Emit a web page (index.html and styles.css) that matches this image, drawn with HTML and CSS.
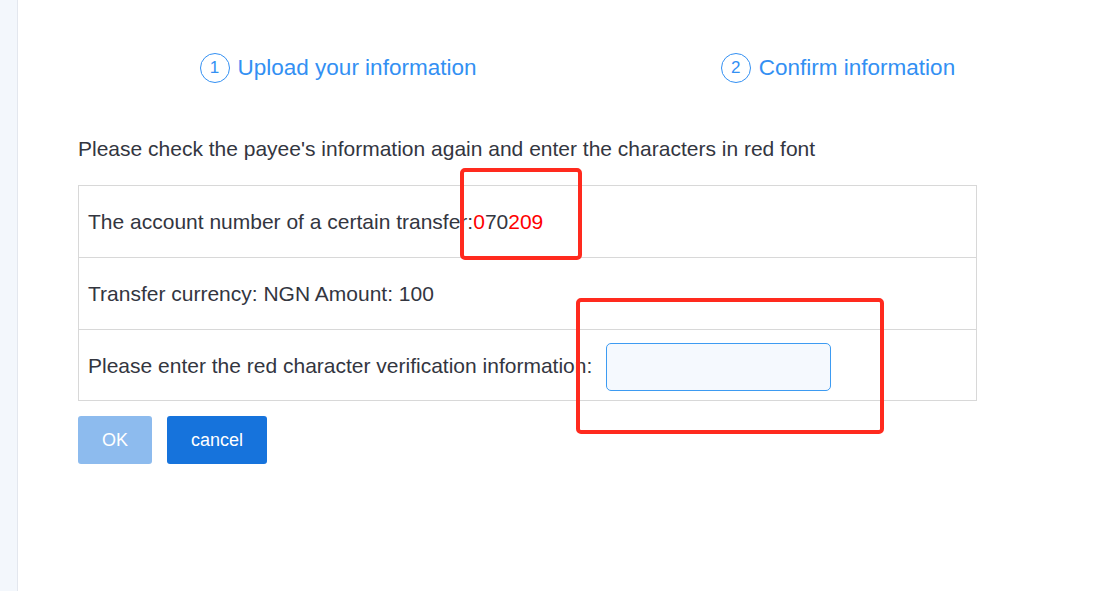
FILE: index.html
```html
<!DOCTYPE html>
<html lang="en">
<head>
<meta charset="utf-8">
<title>Confirm information</title>
<link rel="stylesheet" href="styles.css">
</head>
<body>
<div class="page">
  <aside class="sidebar"></aside>
  <main class="main">
    <div class="steps">
      <div class="step"><span class="step-num">1</span><span class="step-label">Upload your information</span></div>
      <div class="step"><span class="step-num">2</span><span class="step-label">Confirm information</span></div>
    </div>
    <p class="intro">Please check the payee's information again and enter the characters in red font</p>
    <div class="info-table">
      <div class="info-row">The account number of a certain transfer:<span class="red">0</span>70<span class="red">209</span></div>
      <div class="info-row">Transfer currency: NGN Amount: 100</div>
      <div class="info-row">Please enter the red character verification information:<input class="verify-input" type="text"></div>
    </div>
    <div class="actions">
      <button class="btn btn-ok" type="button">OK</button>
      <button class="btn btn-cancel" type="button">cancel</button>
    </div>
  </main>
  <div class="mark mark-account"></div>
  <div class="mark mark-input"></div>
</div>
</body>
</html>
```
FILE: styles.css
```css
html, body {
  margin: 0;
  padding: 0;
  background: #ffffff;
}
body {
  font-family: "Liberation Sans", Arial, sans-serif;
  color: #33363f;
}
.page {
  position: relative;
  display: flex;
  min-height: 591px;
}
.sidebar {
  width: 17px;
  flex: none;
  background: #f3f7fc;
  border-right: 1px solid #e3e7ee;
}
.main {
  flex: 1;
  padding-left: 60px;
}
.steps {
  display: flex;
  margin: 53px 0 0 10px;
}
.step {
  width: 500px;
  display: flex;
  justify-content: center;
  align-items: center;
  gap: 8px;
  color: #3390f3;
  height: 30px;
}
.step-num {
  width: 28px;
  height: 28px;
  border: 1px solid #3390f3;
  border-radius: 50%;
  display: flex;
  align-items: center;
  justify-content: center;
  font-size: 17px;
}
.step-label {
  font-size: 22.5px;
  line-height: 30px;
}
.intro {
  margin: 54px 0 0;
  font-size: 21px;
  line-height: 24px;
}
.info-table {
  margin-top: 24px;
  width: 897px;
  border: 1px solid #d8d8d8;
}
.info-row {
  height: 70px;
  padding-top: 1px;
  display: flex;
  align-items: center;
  padding-left: 9px;
  font-size: 21px;
}
.info-row + .info-row {
  border-top: 1px solid #d8d8d8;
}
.info-row:last-child {
  height: 69px;
}
.red {
  color: #ff0000;
}
.verify-input {
  margin: 3px 0 0 14px;
  width: 223px;
  height: 46px;
  box-sizing: content-box;
  padding: 0;
  border: 1px solid #3d9bf2;
  border-radius: 5px;
  background: #f5f9fe;
  outline: none;
}
.actions {
  display: flex;
  gap: 15px;
  margin-top: 15px;
}
.btn {
  height: 48px;
  border: none;
  border-radius: 3px;
  color: #ffffff;
  font-family: "Liberation Sans", Arial, sans-serif;
  font-size: 18px;
  padding: 0;
}
.btn-ok {
  width: 74px;
  background: #8dbbee;
}
.btn-cancel {
  width: 100px;
  background: #1673dc;
}
.mark {
  position: absolute;
  border: 4px solid #ff2a1e;
  border-radius: 5px;
  box-sizing: border-box;
}
.mark-account {
  left: 460px;
  top: 168px;
  width: 122px;
  height: 92px;
}
.mark-input {
  left: 576px;
  top: 298px;
  width: 308px;
  height: 136px;
}
```
